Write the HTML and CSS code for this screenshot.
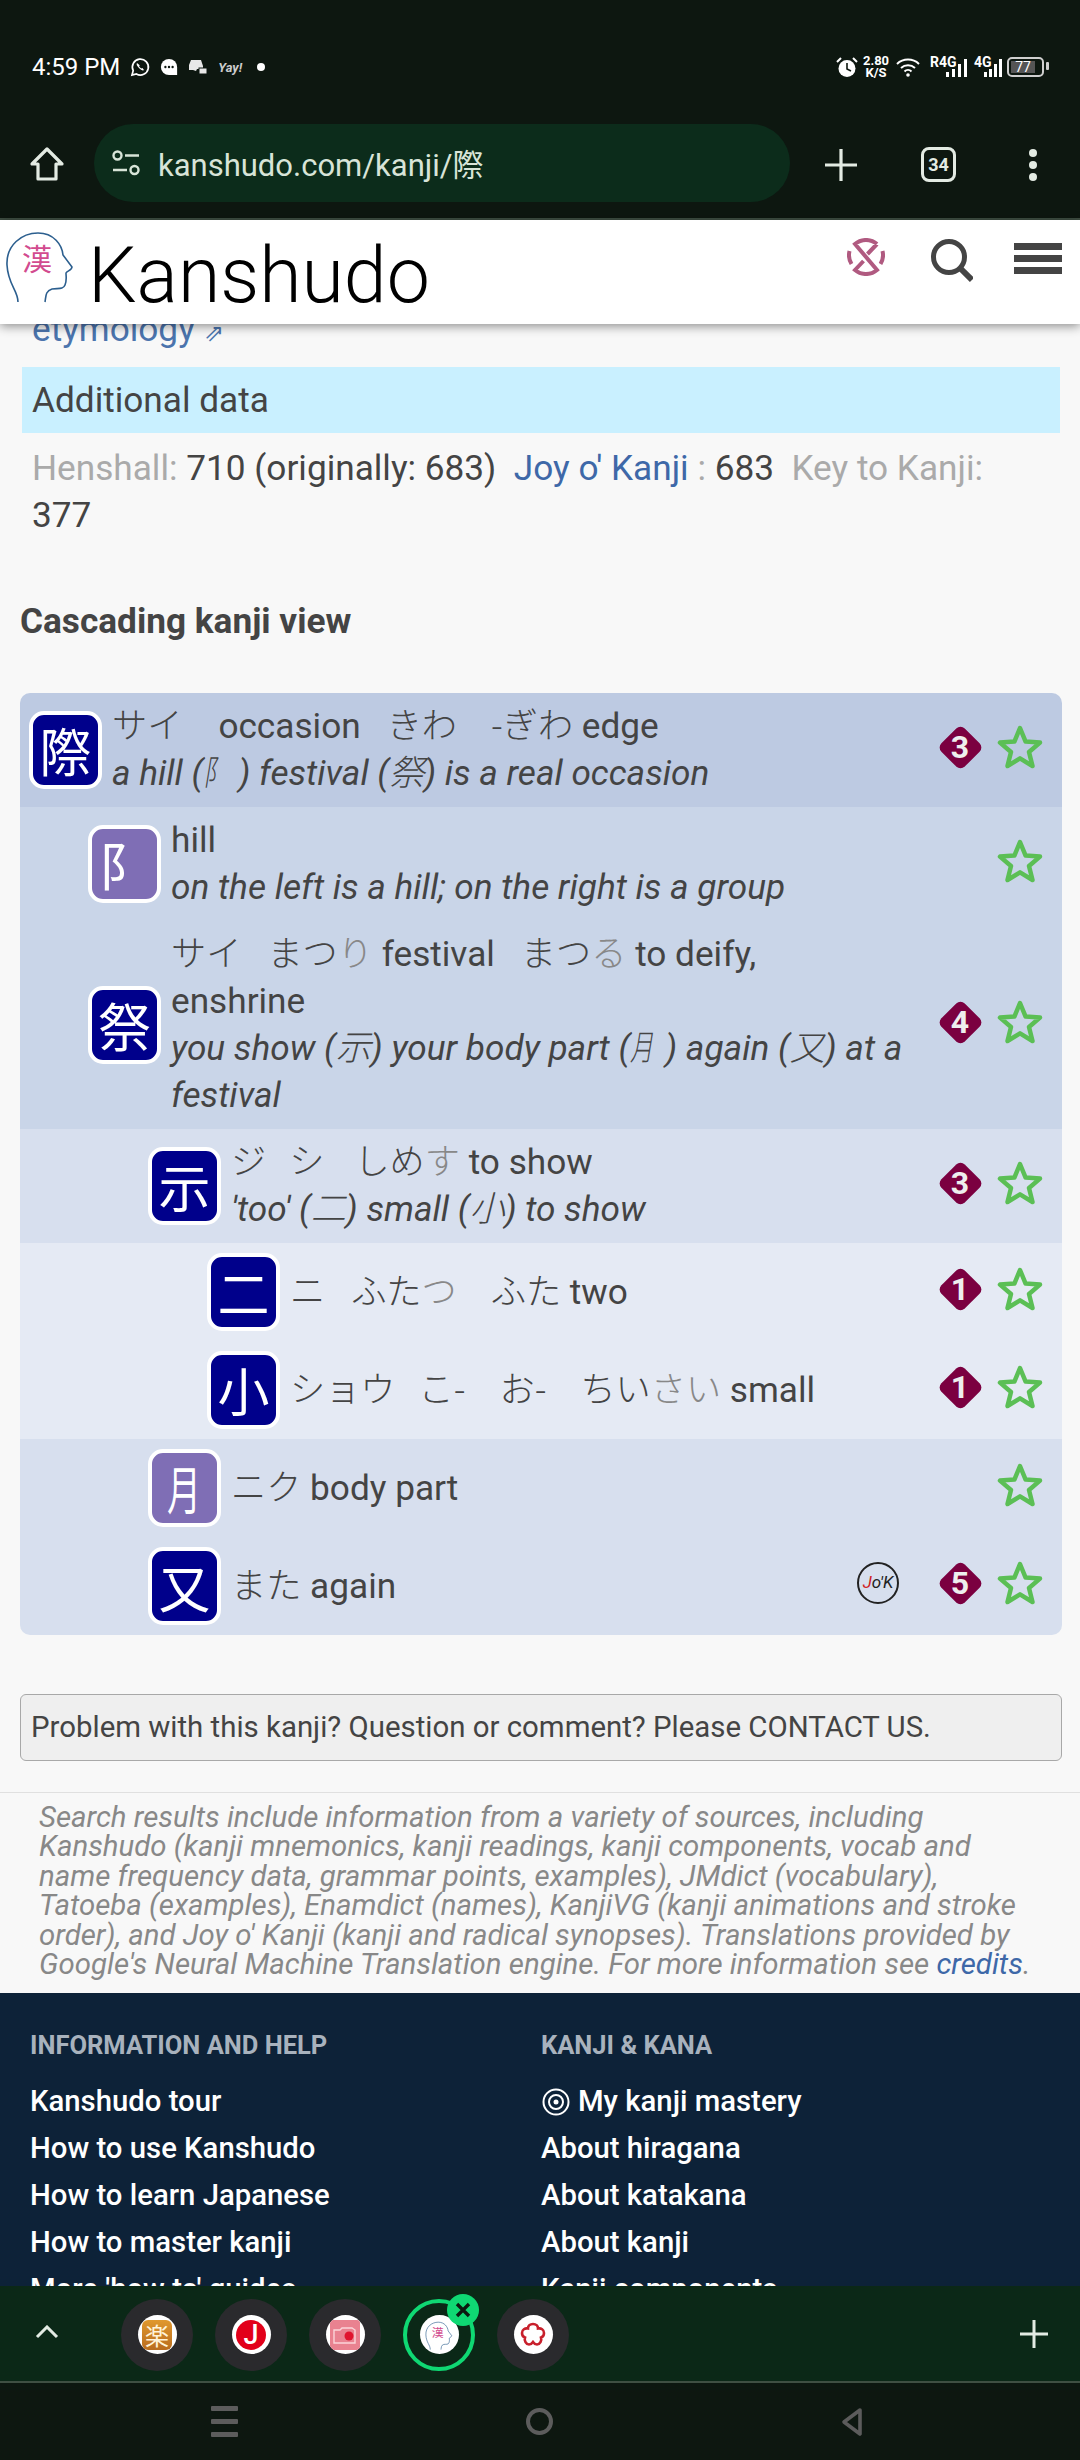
FILE: index.html
```html
<!DOCTYPE html>
<html lang="en">
<head>
    <meta charset="UTF-8">
    <meta name="viewport" content="width=device-width, initial-scale=1.0">
    <title>Kanshudo - kanji</title>
    <link rel="stylesheet" href="styles.css">
</head>
<body>
    <svg class="defs" width="0" height="0">
        <defs>
            <symbol id="star" viewBox="0 0 46 44">
                <polygon points="23,3 28.6,16.6 43,17.6 32,27 35.5,41 23,33.4 10.5,41 14,27 3,17.6 17.4,16.6" fill="none" stroke="#5bbf55" stroke-width="4.500" stroke-linejoin="round"/>
            </symbol>
            <symbol id="head" viewBox="0 0 80 78">
                <path d="M18 77C18 65 8 60 7 40C6 20 22 8 38 8C54 8 62 20 63 30L72 42C72 45 67 46 66 48C66 52 67 55 65 60C63 65 58 63 52 64C45 66 46 72 45 77" fill="none" stroke="#2c5f8f" stroke-width="1.600"/>
                <text x="37" y="45" class="logo-kanji">漢</text>
            </symbol>
        </defs>
    </svg>

    <div class="screen">
        <div class="topbar">
            <div class="status">
                <div class="status-left">
                    <span class="clock">4:59 PM</span>
                    <svg width="20" height="20" viewBox="0 0 20 20"><path d="M2 18l1.200-4.400A8 8 0 1 1 6.400 17z" fill="none" stroke="#fff" stroke-width="1.700"/><path d="M7 6c-1 1 0 3 2 5s4 3 5 2l-1.600-2-1.300.6-2-2 .6-1.300z" fill="#fff"/></svg>
                    <svg width="18" height="18" viewBox="0 0 20 20"><path d="M10 1a9 9 0 0 1 9 9v9H10a9 9 0 0 1 0-18z" fill="#fff"/><circle cx="6" cy="10" r="1.300" fill="#0d1710"/><circle cx="10" cy="10" r="1.300" fill="#0d1710"/><circle cx="14" cy="10" r="1.300" fill="#0d1710"/></svg>
                    <svg width="20" height="18" viewBox="0 0 20 18"><path d="M3 2h10l2 6v3H9l-1 2-3-1-4 0 0-5z" fill="#e8e8e8"/><rect x="11" y="10" width="8" height="6" fill="#e8e8e8" stroke="#0d1710"/></svg>
                    <span class="yay">Yay!</span>
                    <span class="status-dot"></span>
                </div>
                <div class="status-right">
                    <svg width="22" height="22" viewBox="0 0 22 22"><circle cx="11" cy="12.500" r="8.500" fill="#fff"/><path d="M11 7v6l4 2" fill="none" stroke="#0d1710" stroke-width="1.600"/><path d="M1 6l4-4M21 6l-4-4" stroke="#fff" stroke-width="2"/></svg>
                    <div class="speed"><span>2.80</span><span>K/S</span></div>
                    <svg class="wifi" width="24" height="20" viewBox="0 0 24 20"><path d="M1 7a16 16 0 0 1 22 0M5 11a10.500 10.500 0 0 1 14 0M8.500 14.500a5 5 0 0 1 7 0" fill="none" stroke="#fff" stroke-width="2"/><circle cx="12" cy="18" r="1.800" fill="#fff"/></svg>
                    <div class="signal"><span>R4G</span><svg width="22" height="20" viewBox="0 0 22 20"><rect x="0" y="14" width="3" height="5" fill="#fff"/><rect x="6" y="11" width="3" height="8" fill="#fff"/><rect x="12" y="6" width="3" height="13" fill="#fff"/><rect x="18" y="1" width="3" height="18" fill="#fff"/></svg></div>
                    <div class="signal signal-short"><span>4G</span><svg width="18" height="20" viewBox="0 0 18 20"><rect x="0" y="14" width="3" height="5" fill="#fff"/><rect x="5" y="11" width="3" height="8" fill="#fff"/><rect x="10" y="6" width="3" height="13" fill="#fff"/><rect x="15" y="1" width="3" height="18" fill="#fff"/></svg></div>
                    <div class="battery"><span class="battery-fill">77</span></div>
                </div>
            </div>
            <div class="toolbar">
                <svg class="home-icon" width="36" height="36" viewBox="0 0 36 36"><path d="M18 3L3 18h6v15h18V18h6z" fill="none" stroke="#e3ebe3" stroke-width="3.200" stroke-linejoin="round"/></svg>
                <div class="url-pill">
                    <svg width="30" height="30" viewBox="0 0 30 30"><circle cx="6.500" cy="7.500" r="4" fill="none" stroke="#d8e4d8" stroke-width="2.400"/><path d="M14 7.500h14M2 22h14" stroke="#d8e4d8" stroke-width="2.400"/><circle cx="23.500" cy="22" r="4" fill="none" stroke="#d8e4d8" stroke-width="2.400"/></svg>
                    <span class="url-text">kanshudo.com/kanji/際</span>
                </div>
                <svg class="plus-icon" width="34" height="34" viewBox="0 0 34 34"><path d="M17 1v32M1 17h32" stroke="#e3ebe3" stroke-width="3.200"/></svg>
                <div class="tab-count">34</div>
                <svg class="dots-icon" width="10" height="34" viewBox="0 0 10 34"><circle cx="5" cy="5" r="4" fill="#e3ebe3"/><circle cx="5" cy="17" r="4" fill="#e3ebe3"/><circle cx="5" cy="29" r="4" fill="#e3ebe3"/></svg>
            </div>
        </div>

        <header class="site-header">
            <svg class="logo" width="80" height="78"><use href="#head"/></svg>
            <div class="brand">Kanshudo</div>
            <div class="header-icons">
                <svg width="38" height="38" viewBox="0 0 38 38"><path d="M30 6A17 17 0 0 0 8 6L30 32A17 17 0 0 1 8 32L16.500 23M30 6L20.500 16M2.500 13A17 17 0 0 0 4.500 26M35.500 13A17 17 0 0 1 33.500 26" fill="none" stroke="#b05a80" stroke-width="4"/></svg>
                <svg class="search-icon" width="42" height="44" viewBox="0 0 42 44"><circle cx="18" cy="18" r="15.500" fill="none" stroke="#444" stroke-width="5"/><path d="M29 29l12 12" stroke="#444" stroke-width="6"/></svg>
                <div class="burger"><span></span><span></span><span></span></div>
            </div>
        </header>

        <main class="page">
            <a class="etymology">etymology <span class="ext">⇗</span></a>
            <div class="band">Additional data</div>
            <p class="refs">
                <span class="lbl">Henshall:</span> 710 (originally: 683) &nbsp;<a class="link">Joy o' Kanji</a> <span class="lbl">:</span> 683 &nbsp;<span class="lbl">Key to Kanji:</span> 377
            </p>
            <h2 class="section-title">Cascading kanji view</h2>

            <div class="tree">
                <div class="row row-a lvl1">
                    <div class="kanji">際</div>
                    <div class="info">
                        <div><span class="jp">サイ</span><span class="sp sp-lg"></span>occasion<span class="sp sp-md"></span><span class="jp">きわ</span><span class="sp sp-xl"></span><span class="jp">-ぎわ</span> edge</div>
                        <div class="mn">a hill (<span class="jp narrow">阝</span>) festival (<span class="jp">祭</span>) is a real occasion</div>
                    </div>
                    <div class="grade">3</div>
                    <svg class="star"><use href="#star"/></svg>
                </div>
                <div class="row row-b lvl2">
                    <div class="kanji radical">阝</div>
                    <div class="info">
                        <div>hill</div>
                        <div class="mn">on the left is a hill; on the right is a group</div>
                    </div>
                    <svg class="star"><use href="#star"/></svg>
                </div>
                <div class="row row-b lvl2">
                    <div class="kanji">祭</div>
                    <div class="info">
                        <div><span class="jp">サイ</span><span class="sp sp-md"></span><span class="jp">まつ<span class="oku">り</span></span> festival<span class="sp sp-md"></span><span class="jp">まつ<span class="oku">る</span></span> to deify,<br>enshrine</div>
                        <div class="mn">you show (<span class="jp">示</span>) your body part (<span class="jp narrow">月</span>) again (<span class="jp">又</span>) at a festival</div>
                    </div>
                    <div class="grade">4</div>
                    <svg class="star"><use href="#star"/></svg>
                </div>
                <div class="row row-c lvl3">
                    <div class="kanji">示</div>
                    <div class="info">
                        <div><span class="jp">ジ</span><span class="sp sp-s"></span><span class="jp">シ</span><span class="sp sp-w"></span><span class="jp">しめ<span class="oku">す</span></span> to show</div>
                        <div class="mn">'too' (<span class="jp">二</span>) small (<span class="jp">小</span>) to show</div>
                    </div>
                    <div class="grade">3</div>
                    <svg class="star"><use href="#star"/></svg>
                </div>
                <div class="row row-d lvl4">
                    <div class="kanji">二</div>
                    <div class="info">
                        <div><span class="jp">ニ</span><span class="sp sp-md"></span><span class="jp">ふた<span class="oku">つ</span></span><span class="sp sp-xl"></span><span class="jp">ふた</span> two</div>
                    </div>
                    <div class="grade">1</div>
                    <svg class="star"><use href="#star"/></svg>
                </div>
                <div class="row row-d lvl4">
                    <div class="kanji">小</div>
                    <div class="info">
                        <div><span class="jp">ショウ</span><span class="sp sp-s"></span><span class="jp">こ-</span><span class="sp sp-xl"></span><span class="jp">お-</span><span class="sp sp-xl"></span><span class="jp">ちい<span class="oku">さい</span></span> small</div>
                    </div>
                    <div class="grade">1</div>
                    <svg class="star"><use href="#star"/></svg>
                </div>
                <div class="row row-c lvl3">
                    <div class="kanji radical"><span class="narrow-icon">月</span></div>
                    <div class="info">
                        <div><span class="jp">ニク</span> body part</div>
                    </div>
                    <svg class="star"><use href="#star"/></svg>
                </div>
                <div class="row row-c lvl3">
                    <div class="kanji">又</div>
                    <div class="info">
                        <div><span class="jp">また</span> again</div>
                    </div>
                    <div class="jok"><span class="jok-j">J</span>o'K</div>
                    <div class="grade">5</div>
                    <svg class="star"><use href="#star"/></svg>
                </div>
            </div>

            <div class="contact">Problem with this kanji? Question or comment? Please CONTACT US.</div>

            <p class="sources">Search results include information from a variety of sources, including Kanshudo (kanji mnemonics, kanji readings, kanji components, vocab and name frequency data, grammar points, examples), JMdict (vocabulary), Tatoeba (examples), Enamdict (names), KanjiVG (kanji animations and stroke order), and Joy o' Kanji (kanji and radical synopses). Translations provided by Google's Neural Machine Translation engine. For more information see <a class="link">credits</a>.</p>

            <footer class="site-footer">
                <div class="foot-col">
                    <h3>INFORMATION AND HELP</h3>
                    <a>Kanshudo tour</a>
                    <a>How to use Kanshudo</a>
                    <a>How to learn Japanese</a>
                    <a>How to master kanji</a>
                    <a>More 'how to' guides</a>
                </div>
                <div class="foot-col">
                    <h3>KANJI &amp; KANA</h3>
                    <a><svg class="mastery" width="30" height="30" viewBox="0 0 30 30"><circle cx="15" cy="15" r="12.500" fill="none" stroke="#fff" stroke-width="2"/><circle cx="15" cy="15" r="7" fill="none" stroke="#fff" stroke-width="2"/><circle cx="15" cy="15" r="2.500" fill="#fff"/></svg>My kanji mastery</a>
                    <a>About hiragana</a>
                    <a>About katakana</a>
                    <a>About kanji</a>
                    <a>Kanji components</a>
                </div>
            </footer>
        </main>

        <div class="tabstrip">
            <svg class="chevron" width="24" height="14" viewBox="0 0 24 14"><path d="M2 12L12 2l10 10" fill="none" stroke="#e3ebe3" stroke-width="3"/></svg>
            <div class="tabs">
                <div class="tab"><div class="fav"><div class="fav-raku">楽</div></div></div>
                <div class="tab"><div class="fav"><div class="fav-j">J</div></div></div>
                <div class="tab"><div class="fav"><svg width="30" height="30" viewBox="0 0 30 30"><rect width="30" height="30" rx="3" fill="#e98290"/><path d="M4 10h6l2-2h10l3 2v13H4z" fill="none" stroke="#fbd5d9" stroke-width="1.400"/><circle cx="19" cy="16" r="4.500" fill="#e0142e"/></svg></div></div>
                <div class="tab tab-active">
                    <div class="fav"><svg width="32" height="31" viewBox="0 0 80 78"><use href="#head"/></svg></div>
                    <div class="tab-close"><svg width="18" height="18" viewBox="0 0 18 18"><path d="M3 3l12 12M15 3L3 15" stroke="#0b1a10" stroke-width="3.400"/></svg></div>
                </div>
                <div class="tab"><div class="fav"><svg width="30" height="30" viewBox="0 0 30 30"><path d="M15 4c3 0 5 2 5 4.500 3-.5 6 1 6 4.500 0 2.500-1.500 4-3 4.500 1 3-1 7-4 7-2 0-3-1-4-2.500-1 1.500-2 2.500-4 2.500-3 0-5-4-4-7-1.500-.5-3-2-3-4.500 0-3.500 3-5 6-4.500C10 6 12 4 15 4z" fill="none" stroke="#c8202c" stroke-width="2.600"/></svg></div></div>
            </div>
            <svg class="tab-plus" width="28" height="28" viewBox="0 0 28 28"><path d="M14 0v28M0 14h28" stroke="#e3ebe3" stroke-width="3"/></svg>
        </div>

        <nav class="navbar">
            <div class="nav-menu"><span></span><span></span><span></span></div>
            <div class="nav-home"></div>
            <svg width="24" height="30" viewBox="0 0 24 30"><path d="M20 3L4 15l16 12z" fill="none" stroke="#5c5c5c" stroke-width="3.600" stroke-linejoin="round"/></svg>
        </nav>
    </div>
</body>
</html>
```

FILE: styles.css
```css
* {
    margin: 0;
    padding: 0;
    box-sizing: border-box;
}

body {
    font-family: Roboto, "Noto Sans CJK JP", sans-serif;
    background: #f8f8f8;
    color: #444444;
}

.defs {
    position: absolute;
}

.screen {
    width: 1080px;
    height: 2460px;
    display: flex;
    flex-direction: column;
    overflow: hidden;
}

/* phone + browser chrome */
.topbar {
    height: 220px;
    background: #0d1710;
    border-bottom: 2px solid #3f4f43;
    flex-shrink: 0;
}

.status {
    height: 124px;
    padding: 54px 36px 0 32px;
    display: flex;
    justify-content: space-between;
    align-items: flex-start;
    color: #ffffff;
}

.status-left,
.status-right {
    display: flex;
    align-items: center;
    height: 26px;
}

.status-left {
    gap: 10px;
}

.clock {
    font-size: 24px;
}

.yay {
    font-size: 13px;
    font-style: italic;
    font-weight: 700;
    color: #cccccc;
}

.status-dot {
    width: 8px;
    height: 8px;
    background: #ffffff;
    border-radius: 50%;
    margin-left: 5px;
}

.status-right {
    gap: 6px;
}

.speed {
    display: flex;
    flex-direction: column;
    align-items: center;
    font-size: 13px;
    font-weight: 700;
    line-height: 12px;
    width: 26px;
    margin-left: -1px;
}

.wifi {
    margin-left: 1px;
}

.signal {
    display: flex;
    align-items: flex-start;
    width: 38px;
    height: 24px;
    margin-left: 4px;
    position: relative;
    font-size: 14px;
    font-weight: 700;
}

.signal-short {
    width: 28px;
    margin-left: 0;
}

.signal span {
    line-height: 14px;
}

.signal svg {
    position: absolute;
    right: 0;
    top: 3px;
}

.battery {
    width: 37px;
    height: 20px;
    border: 2px solid #cfcfcf;
    border-radius: 5px;
    padding: 2px;
    margin-left: -1px;
    position: relative;
}

.battery::after {
    content: '';
    position: absolute;
    right: -7px;
    top: 3px;
    width: 3px;
    height: 8px;
    background: #cfcfcf;
    border-radius: 1px;
}

.battery-fill {
    display: block;
    width: 24px;
    height: 12px;
    background: #555555;
    color: #ffffff;
    font-size: 14px;
    line-height: 12px;
    text-align: center;
}

.toolbar {
    height: 94px;
    display: flex;
    align-items: flex-start;
}

.home-icon {
    margin: 22px 0 0 29px;
}

.url-pill {
    width: 696px;
    height: 78px;
    margin-left: 29px;
    background: #0c2c1b;
    border-radius: 39px;
    display: flex;
    align-items: center;
    gap: 17px;
    padding-left: 17px;
}

.url-text {
    color: #d8e4d8;
    font-size: 31px;
    position: relative;
    top: -1px;
}

.plus-icon {
    margin: 24px 0 0 34px;
}

.tab-count {
    width: 35px;
    height: 35px;
    margin: 23px 0 0 63px;
    border: 3px solid #e3ebe3;
    border-radius: 8px;
    color: #e3ebe3;
    font-size: 18px;
    font-weight: 700;
    line-height: 29px;
    text-align: center;
}

.dots-icon {
    margin: 24px 0 0 72px;
}

/* site header */
.site-header {
    height: 104px;
    background: #ffffff;
    box-shadow: 0 2px 10px rgba(0, 0, 0, 0.45);
    display: flex;
    align-items: flex-start;
    position: relative;
    flex-shrink: 0;
    z-index: 2;
}

.logo {
    margin: 5px 0 0 0;
}

.logo-kanji {
    font-family: "Noto Sans CJK JP", sans-serif;
    font-size: 30px;
    fill: #d24b8f;
    text-anchor: middle;
}

.brand {
    color: #000000;
    font-size: 77px;
    font-weight: 300;
    line-height: 104px;
    margin: 4px 0 0 8px;
    height: 99px;
}

.header-icons {
    margin-left: auto;
    display: flex;
    align-items: flex-start;
    padding: 18px 18px 0 0;
}

.search-icon {
    margin: 1px 41px 0 46px;
}

.burger {
    width: 48px;
    display: flex;
    flex-direction: column;
    gap: 5px;
    padding-top: 5px;
}

.burger span {
    display: block;
    height: 7px;
    background: #444444;
}

/* page content, scrolled so the first line sits under the header */
.page {
    flex: 1;
    min-height: 0;
    overflow: hidden;
    background: #f8f8f8;
}

.etymology {
    display: block;
    margin: -18px 0 0 32px;
    color: #4b74ad;
    font-size: 35.2px;
    line-height: 47px;
}

.ext {
    font-size: 24px;
}

.band {
    margin: 10px 20px 0 22px;
    height: 66px;
    padding-left: 10px;
    background: #c9f0ff;
    font-size: 35.2px;
    line-height: 66px;
}

.refs {
    margin: 12px 40px 0 32px;
    font-size: 35.2px;
    line-height: 47px;
}

.lbl {
    color: #aaaaaa;
}

.link {
    color: #3e68a8;
}

.section-title {
    margin: 59px 0 0 20px;
    font-size: 35.2px;
    font-weight: 700;
    line-height: 47px;
}

/* cascading kanji tree */
.tree {
    margin: 48px 18px 0 20px;
    border-radius: 10px;
    overflow: hidden;
}

.row {
    display: flex;
    align-items: center;
    padding: 10px 19px 10px 0;
    font-size: 35.2px;
    line-height: 47px;
}

.row-a { background: #bdcae2; }
.row-b { background: #c9d5e8; }
.row-c { background: #d7dfee; }
.row-d { background: #e5eaf4; }

.lvl1 { padding-left: 9px; }
.lvl2 { padding-left: 68px; }
.lvl3 { padding-left: 128px; }
.lvl4 { padding-left: 187px; }

.kanji {
    width: 73px;
    height: 78px;
    flex-shrink: 0;
    margin-right: 10px;
    background: #00008b;
    border: 4px solid #ffffff;
    border-radius: 15px;
    color: #ffffff;
    font-family: "Noto Sans CJK JP", sans-serif;
    font-size: 52px;
    line-height: 70px;
    text-align: center;
}

.radical {
    background: #7f6eb5;
}

.narrow-icon {
    display: inline-block;
    transform: scaleX(0.65);
}

.info {
    flex: 1;
    min-width: 0;
}

/* line-height 0 keeps the CJK font from stretching the 47px lines */
.jp {
    font-family: "Noto Sans CJK JP", sans-serif;
    font-style: normal;
    font-weight: 300;
    line-height: 0;
}

.mn {
    font-style: italic;
}

.mn .jp {
    font-style: italic;
}

.narrow {
    display: inline-block;
    transform: scaleX(0.65);
    transform-origin: left center;
}

.oku {
    color: #888888;
}

.sp {
    display: inline-block;
    width: 20px;
}

.sp-s { width: 23px; }
.sp-md { width: 26px; }
.sp-w { width: 30px; }
.sp-xl { width: 34px; }
.sp-lg { width: 36px; }

.grade {
    width: 42px;
    height: 42px;
    flex-shrink: 0;
    margin: 0 16px 6px 0;
    position: relative;
    isolation: isolate;
    color: #eeeeee;
    font-size: 32px;
    font-weight: 700;
    line-height: 42px;
    text-align: center;
}

.grade::before {
    content: '';
    position: absolute;
    left: 4.5px;
    top: 4.5px;
    width: 33px;
    height: 33px;
    background: #7b0040;
    border-radius: 6px;
    transform: rotate(45deg);
    z-index: -1;
}

.star {
    width: 46px;
    height: 44px;
    flex-shrink: 0;
    margin-bottom: 6px;
}

.jok {
    width: 42px;
    height: 42px;
    flex-shrink: 0;
    margin: 0 40px 6px 0;
    border: 2px solid #222222;
    border-radius: 50%;
    font-size: 17px;
    font-style: italic;
    line-height: 36px;
    text-align: center;
    color: #222222;
    white-space: nowrap;
}

.jok-j {
    color: #d01c24;
}

.contact {
    margin: 59px 18px 0 20px;
    height: 67px;
    padding-left: 10px;
    background: #efefef;
    border: 1px solid #a8a8a8;
    border-radius: 6px;
    font-size: 29.4px;
    line-height: 65px;
}

.sources {
    margin-top: 31px;
    padding: 10px 40px 0 39px;
    border-top: 1px solid #e0e0e0;
    color: #888888;
    font-size: 29.4px;
    font-style: italic;
    line-height: 29.4px;
    height: 201px;
}

.site-footer {
    background: #0d2238;
    padding: 30px 0 30px 30px;
    display: grid;
    grid-template-columns: 511px 1fr;
}

.foot-col h3 {
    color: #a8b2bd;
    font-size: 25.5px;
    font-weight: 700;
    line-height: 44px;
    margin-bottom: 11px;
}

.foot-col a {
    display: flex;
    align-items: center;
    gap: 7px;
    color: #ffffff;
    font-size: 29.3px;
    font-weight: 500;
    line-height: 47px;
}

/* bottom tab strip + nav bar */
.tabstrip {
    height: 95px;
    flex-shrink: 0;
    background: #0b2817;
    display: flex;
    align-items: center;
    padding: 0 32px 0 35px;
}

.chevron {
    margin-top: -4px;
}

.tabs {
    display: flex;
    gap: 22px;
    margin-left: 62px;
    flex: 1;
}

.tab {
    width: 72px;
    height: 72px;
    background: #2a2a2d;
    border-radius: 50%;
    display: flex;
    align-items: center;
    justify-content: center;
    position: relative;
    top: 1px;
}

.tab-active {
    background: none;
    border: 4px solid #0fd873;
}

.tab-close {
    position: absolute;
    right: -8px;
    top: -9px;
    width: 32px;
    height: 32px;
    background: #0fd873;
    border-radius: 50%;
    display: flex;
    align-items: center;
    justify-content: center;
}

.fav {
    width: 39px;
    height: 39px;
    background: #ffffff;
    border-radius: 50%;
    display: flex;
    align-items: center;
    justify-content: center;
    overflow: hidden;
}

.fav-raku {
    width: 30px;
    height: 30px;
    background: linear-gradient(#e0982e, #b86c1e);
    border-radius: 6px;
    color: #fff3d8;
    font-family: "Noto Sans CJK JP", sans-serif;
    font-size: 24px;
    line-height: 29px;
    text-align: center;
}

.fav-j {
    width: 30px;
    height: 30px;
    background: #e2001a;
    border-radius: 50%;
    color: #ffffff;
    font-size: 27px;
    font-weight: 500;
    line-height: 30px;
    text-align: center;
}

.tab-plus {
    flex-shrink: 0;
}

.navbar {
    height: 79px;
    flex-shrink: 0;
    background: #0d1710;
    border-top: 2px solid #3f4f43;
    display: flex;
    align-items: center;
    justify-content: space-between;
    padding: 0 216px 0 211px;
}

.nav-menu {
    width: 27px;
    display: flex;
    flex-direction: column;
    gap: 8px;
}

.nav-menu span {
    display: block;
    height: 5px;
    background: #5c5c5c;
    border-radius: 1px;
}

.nav-home {
    width: 27px;
    height: 27px;
    border: 4px solid #5c5c5c;
    border-radius: 50%;
}
```
